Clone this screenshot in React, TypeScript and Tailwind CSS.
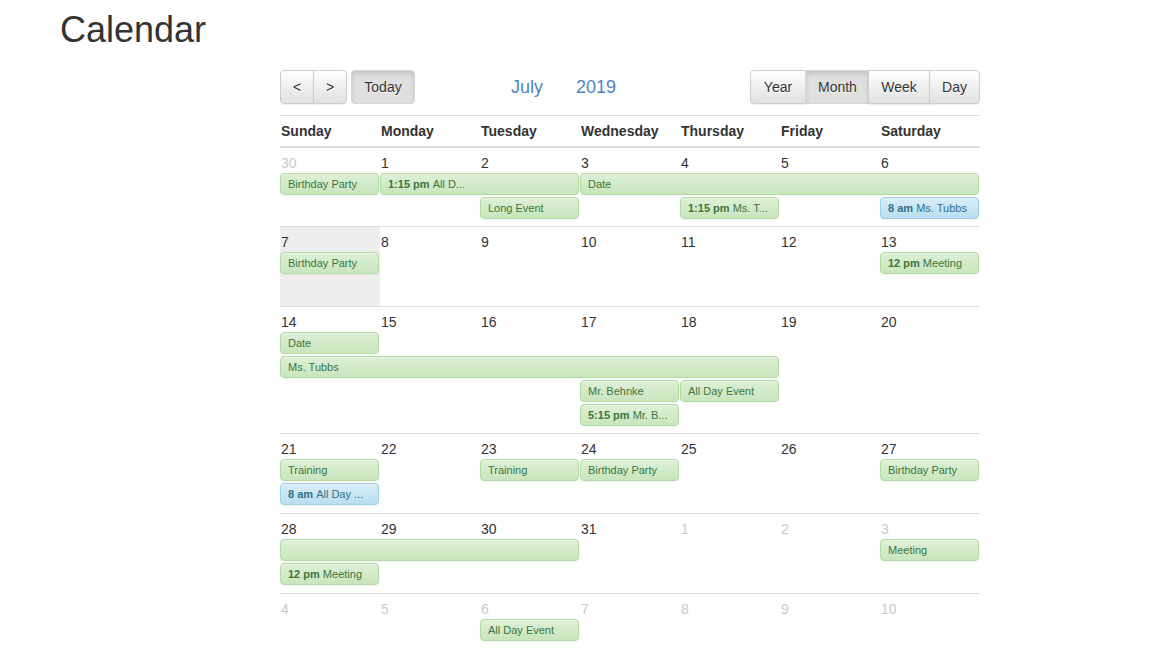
import React from "react";

type Ev = { cls: string; time?: string; text: string; info?: boolean };
type Week = { days: { n: number; muted?: boolean }[]; events: Ev[]; today?: boolean };

const weeks: Week[] = [
  {
    days: [{ n: 30, muted: true }, { n: 1 }, { n: 2 }, { n: 3 }, { n: 4 }, { n: 5 }, { n: 6 }],
    events: [
      { cls: "col-start-1 col-span-1 row-start-1", text: "Birthday Party" },
      { cls: "col-start-2 col-span-2 row-start-1", time: "1:15 pm", text: "All D..." },
      { cls: "col-start-4 col-span-4 row-start-1", text: "Date" },
      { cls: "col-start-3 col-span-1 row-start-2", text: "Long Event" },
      { cls: "col-start-5 col-span-1 row-start-2", time: "1:15 pm", text: "Ms. T..." },
      { cls: "col-start-7 col-span-1 row-start-2", time: "8 am", text: "Ms. Tubbs", info: true },
    ],
  },
  {
    days: [{ n: 7 }, { n: 8 }, { n: 9 }, { n: 10 }, { n: 11 }, { n: 12 }, { n: 13 }],
    today: true,
    events: [
      { cls: "col-start-1 col-span-1 row-start-1", text: "Birthday Party" },
      { cls: "col-start-7 col-span-1 row-start-1", time: "12 pm", text: "Meeting" },
    ],
  },
  {
    days: [{ n: 14 }, { n: 15 }, { n: 16 }, { n: 17 }, { n: 18 }, { n: 19 }, { n: 20 }],
    events: [
      { cls: "col-start-1 col-span-1 row-start-1", text: "Date" },
      { cls: "col-start-1 col-span-5 row-start-2", text: "Ms. Tubbs" },
      { cls: "col-start-4 col-span-1 row-start-3", text: "Mr. Behnke" },
      { cls: "col-start-5 col-span-1 row-start-3", text: "All Day Event" },
      { cls: "col-start-4 col-span-1 row-start-4", time: "5:15 pm", text: "Mr. B..." },
    ],
  },
  {
    days: [{ n: 21 }, { n: 22 }, { n: 23 }, { n: 24 }, { n: 25 }, { n: 26 }, { n: 27 }],
    events: [
      { cls: "col-start-1 col-span-1 row-start-1", text: "Training" },
      { cls: "col-start-3 col-span-1 row-start-1", text: "Training" },
      { cls: "col-start-4 col-span-1 row-start-1", text: "Birthday Party" },
      { cls: "col-start-7 col-span-1 row-start-1", text: "Birthday Party" },
      { cls: "col-start-1 col-span-1 row-start-2", time: "8 am", text: "All Day ...", info: true },
    ],
  },
  {
    days: [{ n: 28 }, { n: 29 }, { n: 30 }, { n: 31 }, { n: 1, muted: true }, { n: 2, muted: true }, { n: 3, muted: true }],
    events: [
      { cls: "col-start-1 col-span-3 row-start-1", text: "" },
      { cls: "col-start-7 col-span-1 row-start-1", text: "Meeting" },
      { cls: "col-start-1 col-span-1 row-start-2", time: "12 pm", text: "Meeting" },
    ],
  },
  {
    days: [4, 5, 6, 7, 8, 9, 10].map((n) => ({ n, muted: true })),
    events: [{ cls: "col-start-3 col-span-1 row-start-1", text: "All Day Event" }],
  },
];

const dayNames = ["Sunday", "Monday", "Tuesday", "Wednesday", "Thursday", "Friday", "Saturday"];

function Btn({
  children,
  active,
  cls,
}: {
  children: React.ReactNode;
  active?: boolean;
  cls: string;
}) {
  return (
    <button
      className={
        "h-[34px] px-[12px] text-[14px] leading-[20px] text-[#333] border [text-shadow:0_1px_0_#fff] " +
        (active
          ? "bg-[#e0e0e0] border-[#d5d5d5] shadow-[inset_0_3px_5px_rgba(0,0,0,0.125)] "
          : "bg-[linear-gradient(to_bottom,#ffffff_0%,#e0e0e0_100%)] border-[#ccc] shadow-[inset_0_1px_0_rgba(255,255,255,0.15),0_1px_1px_rgba(0,0,0,0.075)] ") +
        cls
      }
    >
      {children}
    </button>
  );
}

function Event({ ev }: { ev: Ev }) {
  return (
    <div
      className={
        "h-[22px] mr-px rounded-[4px] border px-[7px] text-[11px] leading-[20px] whitespace-nowrap overflow-hidden shadow-[inset_0_1px_0_rgba(255,255,255,0.25),0_1px_2px_rgba(0,0,0,0.05)] " +
        (ev.info
          ? "bg-[linear-gradient(to_bottom,#d9edf7_0%,#b9def0_100%)] border-[#9acfea] text-[#31708f] "
          : "bg-[linear-gradient(to_bottom,#dff0d8_0%,#c8e5bc_100%)] border-[#b2dba1] text-[#3c763d] ") +
        ev.cls
      }
    >
      {ev.time && <span className="font-bold">{ev.time} </span>}
      {ev.text}
    </div>
  );
}

export default function App() {
  return (
    <div className="min-h-[653px] bg-white font-['Liberation_Sans',Arial,sans-serif] text-[#333]">
      <h1 className="pl-[60px] pt-[10px] text-[36px] leading-[40px] font-normal text-[#333]">Calendar</h1>
      <div className="ml-[280px] w-[700px] mt-[20px]">
        <div className="flex items-center h-[34px]">
          <div className="flex">
            <Btn cls="rounded-l-[4px] w-[34px] px-0">&lt;</Btn>
            <Btn cls="rounded-r-[4px] -ml-px w-[34px] px-0">&gt;</Btn>
          </div>
          <Btn active cls="ml-[4px] rounded-[4px] w-[64px] px-0">Today</Btn>
          <div className="ml-[96px] flex text-[18px] leading-[24px] text-[#4b87c1]">
            <span>July</span>
            <span className="ml-[33px]">2019</span>
          </div>
          <div className="ml-auto flex">
            <Btn cls="rounded-l-[4px] w-[56px] px-0">Year</Btn>
            <Btn active cls="-ml-px w-[64px] px-0">Month</Btn>
            <Btn cls="-ml-px w-[62px] px-0">Week</Btn>
            <Btn cls="-ml-px rounded-r-[4px] w-[51px] px-0">Day</Btn>
          </div>
        </div>
        <div className="mt-[11px] grid grid-cols-7 border-t border-b-2 border-[#ddd] py-[5px] text-[14px] leading-[20px] font-bold">
          {dayNames.map((d) => (
            <div key={d} className="pl-px">{d}</div>
          ))}
        </div>
        {weeks.map((w, i) => (
          <div
            key={i}
            className={
              "pb-[5px] " +
              (i === 0 ? "min-h-[79px] " : "min-h-[80px] ") +
              (i < weeks.length - 1 ? "border-b border-[#ddd] " : "") +
              (w.today ? "bg-[linear-gradient(to_right,#eeeeee_0px,#eeeeee_100px,transparent_100px)]" : "")
            }
          >
            <div className="grid grid-cols-7 pt-[5px] text-[14px] leading-[20px]">
              {w.days.map((d, j) => (
                <div key={j} className={"pl-px " + (d.muted ? "text-[#c8c8c8]" : "text-[#333]")}>
                  {d.n}
                </div>
              ))}
            </div>
            <div className="grid grid-cols-7 auto-rows-[24px]">
              {w.events.map((ev, k) => (
                <Event key={k} ev={ev} />
              ))}
            </div>
          </div>
        ))}
      </div>
    </div>
  );
}
